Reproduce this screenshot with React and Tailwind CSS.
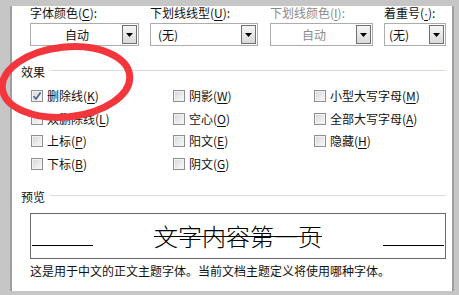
import React from "react";

const Key = ({ children }) => <span className="underline underline-offset-2">{children}</span>;

const Arrow = () => (
  <div className="w-[15px] h-full border border-[#707070] bg-gradient-to-b from-[#f6f6f6] to-[#d9d9d9] flex items-center justify-center">
    <svg width="7" height="4" viewBox="0 0 7 4">
      <path d="M0 0 L7 0 L3.5 4 Z" fill="#000" />
    </svg>
  </div>
);

const Select = ({ width, value, center, disabled, padLeft }) => (
  <div className={`${width} h-[23px] mt-[3px] flex border border-[#acacac] bg-white p-px`}>
    <div
      className={`flex-1 flex items-center ${center ? "justify-center" : "justify-start"} ${padLeft} ${
        disabled ? "text-[#8a8a8a]" : "text-[#111]"
      }`}
    >
      {value}
    </div>
    <Arrow />
  </div>
);

const Check = ({ checked, children }) => (
  <div className="h-[22.6px] flex items-center">
    <div className="w-[12px] h-[12px] border border-[#8e8f8f] bg-gradient-to-br from-[#d6d6d6] to-[#fbfbfb] shadow-[inset_0_0_0_1px_#f2f2f2] flex items-center justify-center">
      {checked && (
        <svg width="10" height="10" viewBox="0 0 10 10">
          <path d="M1.5 5.2 L4 8 L8.6 1.6" stroke="#4d5f86" strokeWidth="1.7" fill="none" />
        </svg>
      )}
    </div>
    <span className="ml-[4px] text-[#111]">{children}</span>
  </div>
);

const Heading = ({ children }) => (
  <div className="flex items-center pl-[9px] pr-[6px] h-[14px]">
    <span className="text-[#111]">{children}</span>
    <div className="flex-1 ml-[5px] mb-[3px] h-px bg-[#d8dde5]" />
  </div>
);

export default function App() {
  return (
    <div className="w-[459px] h-[295px] bg-[#c6c6c6] relative overflow-hidden pt-[6px] pl-[10px] font-['Noto_Sans_CJK_SC',sans-serif] text-[12px] leading-[14px]">
      <div className="w-[444px] h-[285px] bg-white border-l-2 border-r-2 border-[#9e9e9e]">
        {/* font options row */}
        <div className="flex pl-[18px]">
          <div className="w-[120px]">
            <div className="h-[14px] text-[#111]">
              字体颜色(<Key>C</Key>):
            </div>
            <Select width="w-[109px]" value="自动" center />
          </div>
          <div className="w-[120px]">
            <div className="h-[14px] text-[#111]">
              下划线线型(<Key>U</Key>):
            </div>
            <Select width="w-[108px]" value="(无)" padLeft="pl-[6px]" />
          </div>
          <div className="w-[114px]">
            <div className="h-[14px] text-[#8a8a8a]">
              下划线颜色(<Key>I</Key>):
            </div>
            <Select width="w-[103px]" value="自动" center disabled />
          </div>
          <div className="w-[62px]">
            <div className="h-[14px] text-[#111]">
              着重号(<span className="underline underline-offset-2 font-['Liberation_Sans',sans-serif]">·</span>):
            </div>
            <Select width="w-[62px]" value="(无)" padLeft="pl-[3px]" />
          </div>
        </div>

        {/* effects */}
        <div className="mt-[19px]">
          <Heading>效果</Heading>
        </div>
        <div className="flex pl-[19px] mt-[6px]">
          <div className="w-[142px]">
            <Check checked>
              删除线(<Key>K</Key>)
            </Check>
            <Check>
              双删除线(<Key>L</Key>)
            </Check>
            <Check>
              上标(<Key>P</Key>)
            </Check>
            <Check>
              下标(<Key>B</Key>)
            </Check>
          </div>
          <div className="w-[141px]">
            <Check>
              阴影(<Key>W</Key>)
            </Check>
            <Check>
              空心(<Key>O</Key>)
            </Check>
            <Check>
              阳文(<Key>E</Key>)
            </Check>
            <Check>
              阴文(<Key>G</Key>)
            </Check>
          </div>
          <div>
            <Check>
              小型大写字母(<Key>M</Key>)
            </Check>
            <Check>
              全部大写字母(<Key>A</Key>)
            </Check>
            <Check>
              隐藏(<Key>H</Key>)
            </Check>
          </div>
        </div>

        {/* preview */}
        <div className="mt-[14.6px]">
          <Heading>预览</Heading>
        </div>
        <div className="ml-[18px] mt-[9px] w-[416px] h-[46px] border border-[#6b6b6b] flex px-px">
          <div className="w-[61px] h-px bg-black mt-[31px]" />
          <div className="flex-1 flex items-center justify-center">
            <span className="text-[24px] leading-[28px] font-light text-black line-through decoration-1 decoration-black">
              文字内容第一页
            </span>
          </div>
          <div className="w-[61px] h-px bg-black mt-[31px]" />
        </div>
        <div className="pl-[18px] mt-[5px] text-[#111]">
          这是用于中文的正文主题字体。当前文档主题定义将使用哪种字体。
        </div>
      </div>

      {/* red annotation */}
      <svg className="absolute inset-0" width="459" height="295" viewBox="0 0 459 295">
        <ellipse
          cx="66"
          cy="82"
          rx="64"
          ry="35"
          transform="rotate(-6 66 82)"
          fill="none"
          stroke="#f2363c"
          strokeWidth="7"
        />
      </svg>
    </div>
  );
}
